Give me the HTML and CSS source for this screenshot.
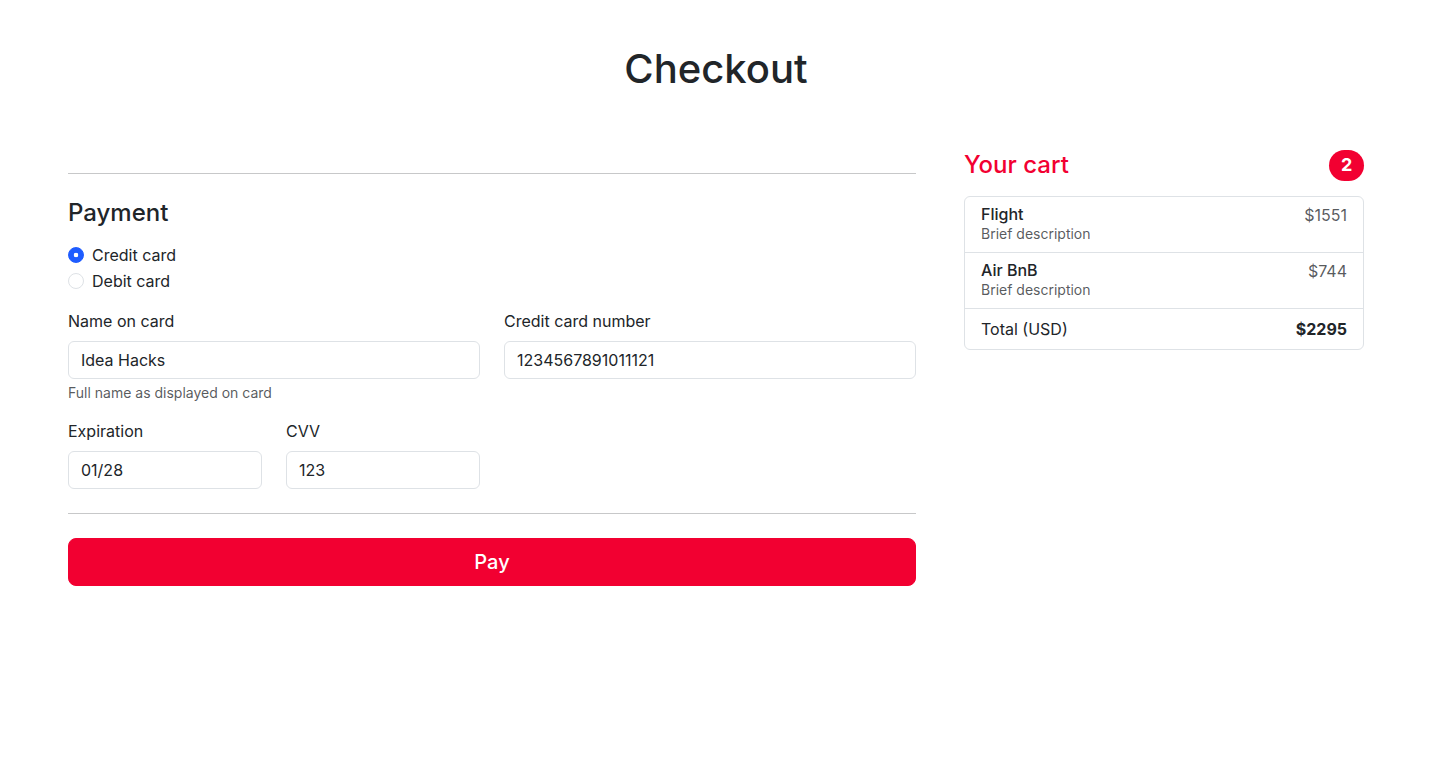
FILE: index.html
```html
<!DOCTYPE html>
<html lang="en">
<head>
<meta charset="utf-8">
<title>Checkout</title>
<link rel="stylesheet" href="styles.css">
</head>
<body>
<div class="container">
  <header class="page-header">
    <h1 class="page-title">Checkout</h1>
  </header>
  <div class="main-row">
    <section class="pay-col">
      <hr class="divider divider-top">
      <h4 class="section-title">Payment</h4>
      <div class="radio-group">
        <label class="form-check">
          <input class="radio" type="radio" name="pm" checked>
          <span>Credit card</span>
        </label>
        <label class="form-check">
          <input class="radio" type="radio" name="pm">
          <span>Debit card</span>
        </label>
      </div>
      <div class="fields">
        <div class="field span2">
          <label class="form-label">Name on card</label>
          <input class="form-control" type="text" value="Idea Hacks">
          <div class="form-text">Full name as displayed on card</div>
        </div>
        <div class="field span2">
          <label class="form-label">Credit card number</label>
          <input class="form-control" type="text" value="1234567891011121">
        </div>
        <div class="field">
          <label class="form-label">Expiration</label>
          <input class="form-control" type="text" value="01/28">
        </div>
        <div class="field">
          <label class="form-label">CVV</label>
          <input class="form-control" type="text" value="123">
        </div>
      </div>
      <hr class="divider">
      <button class="pay-btn" type="button">Pay</button>
    </section>
    <aside class="cart-col">
      <div class="cart-head">
        <h4 class="cart-title">Your cart</h4>
        <span class="badge">2</span>
      </div>
      <ul class="list-group">
        <li class="list-item">
          <div>
            <h6 class="item-name">Flight</h6>
            <small class="item-desc">Brief description</small>
          </div>
          <span class="item-price">$1551</span>
        </li>
        <li class="list-item">
          <div>
            <h6 class="item-name">Air BnB</h6>
            <small class="item-desc">Brief description</small>
          </div>
          <span class="item-price">$744</span>
        </li>
        <li class="list-item total">
          <span>Total (USD)</span>
          <strong>$2295</strong>
        </li>
      </ul>
    </aside>
  </div>
</div>
</body>
</html>
```
FILE: styles.css
```css
* { box-sizing: border-box; }
html, body { margin: 0; padding: 0; background: #fff; }
body {
  font-family: Inter, "Noto Sans", "Liberation Sans", sans-serif;
  font-size: 16px;
  line-height: 1.5;
  color: #212529;
}
.container {
  max-width: 1320px;
  margin: 0 auto;
  padding: 0 12.5px 0 11.5px;
}
.page-header {
  padding: 45px 0 57px;
  text-align: center;
}
.page-title {
  margin: 0;
  font-size: 40px;
  line-height: 1.2;
  font-weight: 500;
}
.main-row {
  display: grid;
  grid-template-columns: minmax(0, 53fr) minmax(0, 25fr);
  column-gap: 48px;
  align-items: start;
}
.divider {
  margin: 24px 0;
  border: 0;
  border-top: 1px solid rgba(33, 37, 41, 0.25);
}
.divider-top { margin: 23px 0 25px; }
.section-title {
  margin: 0 0 15px;
  font-size: 24px;
  line-height: 1.2;
  font-weight: 500;
}
.radio-group {
  margin: 0 0 16px;
}
.form-check {
  display: flex;
  align-items: flex-start;
  gap: 8px;
  min-height: 24px;
  margin-bottom: 2px;
  cursor: pointer;
}
.form-check:last-child { margin-bottom: 0; }
.radio {
  appearance: none;
  -webkit-appearance: none;
  width: 16px;
  height: 16px;
  margin: 4px 0 0;
  border: 1px solid #dee2e6;
  border-radius: 50%;
  background: #fff;
  flex: none;
}
.radio:checked {
  border-color: #1e5cff;
  background: radial-gradient(circle, #fff 0 2px, #1e5cff 2.6px);
}
.fields {
  display: grid;
  grid-template-columns: repeat(4, minmax(0, 1fr));
  column-gap: 24px;
  row-gap: 16px;
}
.span2 { grid-column: span 2; }
.form-label {
  display: block;
  margin-bottom: 8px;
}
.form-control {
  display: block;
  width: 100%;
  padding: 6px 12px;
  font: inherit;
  line-height: 24px;
  color: #212529;
  background: #fff;
  border: 1px solid #dee2e6;
  border-radius: 6px;
  outline: none;
}
.form-text {
  margin-top: 3px;
  font-size: 14px;
  line-height: 21px;
  color: rgba(33, 37, 41, 0.75);
}
.pay-btn {
  display: block;
  width: 100%;
  padding: 8px 16px;
  font-family: inherit;
  font-size: 20px;
  line-height: 30px;
  font-weight: 500;
  color: #fff;
  background: #f20031;
  border: 1px solid #f20031;
  border-radius: 8px;
  cursor: pointer;
}
.cart-head {
  display: flex;
  justify-content: space-between;
  align-items: center;
  margin-bottom: 15px;
}
.cart-title {
  margin: 0;
  font-size: 24px;
  line-height: 1.2;
  font-weight: 500;
  color: #f20031;
}
.badge {
  display: inline-block;
  padding: 6.3px 11.7px;
  font-size: 18px;
  font-weight: 700;
  line-height: 1;
  color: #fff;
  background: #f20031;
  border-radius: 50rem;
}
.list-group {
  list-style: none;
  margin: 0;
  padding: 0;
  border: 1px solid #dee2e6;
  border-radius: 6px;
}
.list-item {
  display: flex;
  justify-content: space-between;
  padding: 8px 16px;
  border-bottom: 1px solid #dee2e6;
}
.list-item:last-child { border-bottom: 0; }
.item-name {
  margin: 0;
  font-size: 16px;
  line-height: 1.2;
  font-weight: 500;
}
.item-desc {
  display: block;
  font-size: 14px;
  line-height: 20px;
  color: rgba(33, 37, 41, 0.75);
}
.item-price {
  line-height: 21px;
  color: rgba(33, 37, 41, 0.75);
}
.total strong { font-weight: 700; }
```
